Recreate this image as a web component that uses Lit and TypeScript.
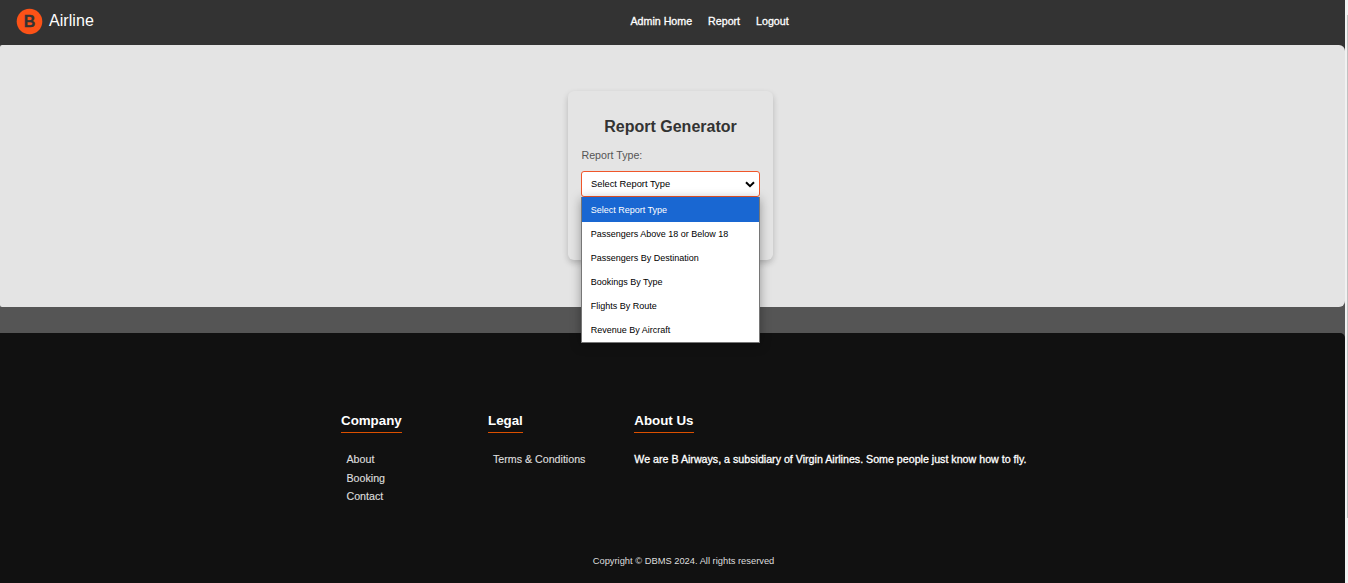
import { LitElement, html, css } from "lit";
import { customElement, state } from "lit/decorators.js";

const OPTIONS = [
  "Select Report Type",
  "Passengers Above 18 or Below 18",
  "Passengers By Destination",
  "Bookings By Type",
  "Flights By Route",
  "Revenue By Aircraft",
];

@customElement("site-header")
class SiteHeader extends LitElement {
  static styles = css`
    :host { display: block; background: #333; height: 45px; color: #fff; }
    .bar { display: grid; grid-template-columns: 630.5px 1fr; height: 42px; align-items: center; }
    .brand { display: flex; align-items: center; gap: 6px; padding-left: 16px; font-size: 16px; letter-spacing: 0.06px; line-height: 18px; }
    .brand svg { display: block; width: 27px; height: 27px; margin-top: 1px; }
    .name { margin-top: -1px; }
    nav { display: flex; gap: 16px; font-size: 10.67px; line-height: 14px; -webkit-text-stroke: 0.3px #fff; }
    a { color: inherit; text-decoration: none; }
  `;
  render() {
    return html`<div class="bar">
      <div class="brand">
        <svg viewBox="0 0 27 27">
          <circle cx="13.5" cy="13.5" r="12.8" fill="#fc5217" />
          <text x="13.6" y="19.2" text-anchor="middle" font-size="16" font-weight="700" fill="#333" stroke="#333" stroke-width=".3">B</text>
        </svg>
        <span class="name">Airline</span>
      </div>
      <nav><a>Admin Home</a><a>Report</a><a>Logout</a></nav>
    </div>`;
  }
}

@customElement("report-form")
class ReportForm extends LitElement {
  static styles = css`
    :host { display: block; box-sizing: border-box; width: 205px; height: 169px; padding: 27px 13px 0;
      border-radius: 6px; background: #e4e4e4; box-shadow: 0 3px 6px rgba(0,0,0,.2); }
    h2 { margin: 0; font-size: 16px; line-height: 18px; text-align: center; color: #333; }
    label { display: block; margin-top: 13px; font-size: 10.67px; line-height: 12px; color: #555; padding-left: 0.5px; }
    .field { position: relative; margin-top: 10px; }
    .select { box-sizing: border-box; height: 26px; border: 1px solid #f0562a; border-radius: 3px; background: #fff;
      display: flex; align-items: center; justify-content: space-between; padding: 0 4px 0 9px;
      font-size: 9.33px; color: #000; width: 179px; }
    .select svg { display: block; width: 10px; height: 7px; margin-top: 1px; }
    .menu { position: absolute; top: 26px; left: 0; box-sizing: border-box; width: 179px; height: 146px; margin: 0; padding: 0;
      list-style: none; background: #fff; border: 1px solid #767676; border-top: 0; box-shadow: 0 2px 10px rgba(0,0,0,.35); font-size: 9px; color: #000; }
    .menu li { height: 24px; line-height: 24px; padding-left: 8.7px; white-space: nowrap; }
    .menu li.on { background: #1967d2; color: #fff; height: 25px; line-height: 26px; }
  `;
  @state() selected = 0;
  render() {
    return html`<h2>Report Generator</h2>
      <label>Report Type:</label>
      <div class="field">
        <div class="select"><span>${OPTIONS[this.selected]}</span>
          <svg viewBox="0 0 10 7"><path d="M1 1.2 L5 5.2 L9 1.2" fill="none" stroke="#000" stroke-width="2" /></svg>
        </div>
        <ul class="menu">
          ${OPTIONS.map((o, i) => html`<li class=${i === this.selected ? "on" : ""} @click=${() => (this.selected = i)}>${o}</li>`)}
        </ul>
      </div>`;
  }
}

@customElement("site-footer")
class SiteFooter extends LitElement {
  static styles = css`
    :host { display: block; box-sizing: border-box; height: 250px; background: #111; color: #fff; border-radius: 0 5px 0 0; padding: 78px 0 0 341px; }
    .cols { display: grid; grid-template-columns: 147px 146.3px 1fr; height: 143px; align-items: start; }
    h3 { display: inline-block; margin: 0; font-size: 13.33px; line-height: 17px; padding-bottom: 3px; border-bottom: 1px solid #dc5000; }
    ul { list-style: none; margin: 17px 0 0; padding: 0 0 0 5.5px; font-size: 10.67px; line-height: 18.5px; color: #ddd; -webkit-text-stroke: 0.15px #ddd; }
    .legal ul { padding-left: 5px; }
    p { margin: 17px 0 0; font-size: 10.67px; line-height: 18.5px; white-space: nowrap; -webkit-text-stroke: 0.3px #fff; }
    .copy { width: 685px; text-align: center; font-size: 9.33px; line-height: 14px; color: #ddd; }
  `;
  render() {
    return html`<div class="cols">
        <section><h3>Company</h3><ul><li>About</li><li>Booking</li><li>Contact</li></ul></section>
        <section class="legal"><h3>Legal</h3><ul><li>Terms &amp; Conditions</li></ul></section>
        <section><h3>About Us</h3><p>We are B Airways, a subsidiary of Virgin Airlines. Some people just know how to fly.</p></section>
      </div>
      <div class="copy">Copyright © DBMS 2024. All rights reserved</div>`;
  }
}

@customElement("app-root")
class AppRoot extends LitElement {
  static styles = css`
    :host { display: grid; grid-template-columns: 1345px 3px; height: 583px; overflow: hidden;
      font-family: "Liberation Sans", Arial, sans-serif; }
    .page { background: #555; }
    main { box-sizing: border-box; height: 262px; background: #e4e4e4; border-radius: 2px 6px 6px 2px; padding: 46px 0 0 568px; }
    site-footer { margin-top: 26px; }
    .corner { background: linear-gradient(#333 50%, #555 50%); }
    .track { background: #f1f1f1; padding: 15px 0 0 2px; }
    .thumb { height: 503px; background: #c1c1c1; }
  `;
  render() {
    return html`<div class="page">
        <site-header></site-header>
        <div class="corner"><main><report-form></report-form></main></div>
        <site-footer></site-footer>
      </div>
      <div class="track"><div class="thumb"></div></div>`;
  }
}
